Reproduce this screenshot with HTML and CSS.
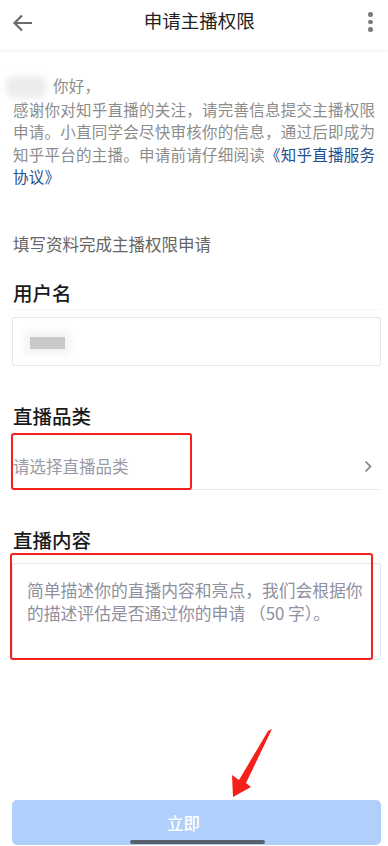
FILE: index.html
```html
<!DOCTYPE html>
<html lang="zh-CN">
<head>
    <meta charset="UTF-8">
    <meta name="viewport" content="width=device-width, initial-scale=1.0">
    <title>申请主播权限</title>
    <link rel="stylesheet" href="styles.css">
</head>
<body>
    <div id="page">
        <div class="header">
            <svg class="back" width="22" height="22" viewBox="0 0 22 22">
                <path d="M20 11H3M10 3.5L2.5 11L10 18.5" fill="none" stroke="#6b6b6b" stroke-width="2.2"/>
            </svg>
            <div class="title">申请主播权限</div>
            <div class="more">
                <span></span><span></span><span></span>
            </div>
        </div>

        <div class="content">
            <p class="greeting"><span class="blur-name"></span>你好，<br>感谢你对知乎直播的关注，请完善信息提交主播权限申请。小直同学会尽快审核你的信息，通过后即成为知乎平台的主播。申请前请仔细阅读<a class="link">《知乎直播服务协议》</a></p>

            <p class="intro">填写资料完成主播权限申请</p>

            <div class="label first">用户名</div>
            <div class="input">
                <span class="blur-user"></span>
            </div>

            <div class="label">直播品类</div>
            <div class="select">
                <span class="placeholder">请选择直播品类</span>
                <svg class="chevron" width="8" height="13" viewBox="0 0 8 13">
                    <path d="M1.5 1.5L6.5 6.5L1.5 11.5" fill="none" stroke="#7a7c88" stroke-width="1.6"/>
                </svg>
                <div class="mark mark-select"></div>
            </div>

            <div class="label">直播内容</div>
            <div class="textarea">
                <p class="placeholder">简单描述你的直播内容和亮点，我们会根据你的描述评估是否通过你的申请 （50 字）。</p>
                <div class="mark mark-text"></div>
            </div>
        </div>

        <button class="submit">立即</button>

        <svg class="arrow" width="388" height="846" viewBox="0 0 388 846">
            <polygon points="272,729 246,783 251,787 233,797 232,775 239,780 268,731" fill="#f5201a"/>
        </svg>
        <div class="home-bar"></div>
    </div>
</body>
</html>
```

FILE: styles.css
```css
body {
    margin: 0;
    background-color: #fff;
    font-family: "Noto Sans CJK SC", "Noto Sans", sans-serif;
}

#page {
    position: relative;
    width: 388px;
    height: 846px;
    overflow: hidden;
    display: flex;
    flex-direction: column;
}

.header {
    height: 50px;
    display: flex;
    align-items: center;
    justify-content: space-between;
    padding: 0 15px 0 12px;
    box-shadow: 0 1px 3px rgba(0, 0, 0, 0.08);
    flex-shrink: 0;
}

.back {
    margin-top: -4px;
}

.title {
    font-size: 18.5px;
    color: #222;
    margin-top: -10px;
    margin-left: -4px;
}

.more {
    display: flex;
    flex-direction: column;
    gap: 3px;
    margin-top: -6px;
}

.more span {
    width: 4.5px;
    height: 4.5px;
    border-radius: 50%;
    background-color: #7a7a7a;
}

.content {
    padding: 0 7px 0 12px;
}

.greeting {
    margin: 23.5px 0 0;
    font-size: 15.5px;
    letter-spacing: 0.25px;
    line-height: 22.6px;
    color: #8c8c8c;
    padding-left: 1px;
}

.blur-name {
    display: inline-block;
    width: 40px;
    height: 22px;
    margin-left: -7px;
    margin-right: 7px;
    vertical-align: -6px;
    background-color: #ececec;
    border-radius: 8px;
    filter: blur(3px);
}

.link {
    color: #1f4f8f;
}

.intro {
    margin: 45px 0 0;
    font-size: 16.5px;
    line-height: 23px;
    color: #666;
    padding-left: 1px;
}

.label {
    margin-top: 37px;
    font-size: 19.5px;
    line-height: 26px;
    font-weight: 500;
    color: #1a1a1a;
    padding-left: 1px;
}

.label.first {
    margin-top: 24.5px;
    padding-bottom: 3px;
    border-bottom: 1px solid #f4f4f4;
}

.input {
    margin-top: 7px;
    height: 47px;
    border: 1px solid #e6e6e6;
    border-radius: 2px;
    display: flex;
    align-items: center;
    padding-left: 17px;
}

.blur-user {
    width: 35px;
    height: 12px;
    background-color: #c9c9c9;
    box-shadow: 0 0 6px 6px #f5f5f5;
    margin-top: 2px;
}

.select {
    position: relative;
    margin-top: 4px;
    padding: 21.5px 0 11.5px 1px;
    border-bottom: 1px solid #ececec;
    display: flex;
    justify-content: space-between;
    align-items: center;
}

.placeholder {
    font-size: 16.5px;
    line-height: 23px;
    color: #9a9ba6;
}

.chevron {
    margin-right: 9px;
}

.textarea {
    position: relative;
    margin-top: 10px;
    height: 95px;
    border: 1px solid #e6e6e6;
    border-radius: 2px;
    padding: 0 14px;
}

.textarea .placeholder {
    margin: 15px 0 0;
    font-size: 16.8px;
    color: #8f8f9e;
}

.mark {
    position: absolute;
    border: 2.5px solid #f5201a;
    border-radius: 3px;
}

.mark-select {
    left: -1px;
    top: 0;
    width: 177px;
    height: 53px;
}

.mark-text {
    left: -3px;
    top: -11px;
    width: 359px;
    height: 103px;
}

.submit {
    margin: auto 7px 1px 12px;
    height: 45px;
    border: none;
    border-radius: 5px;
    padding-right: 32px;
    background-color: #b1cffb;
    color: #fff;
    font-family: "Noto Sans CJK SC", sans-serif;
    font-size: 16.5px;
    font-weight: 500;
}

.arrow {
    position: absolute;
    left: 0;
    top: 0;
    pointer-events: none;
}

.home-bar {
    position: absolute;
    left: 130px;
    bottom: 2px;
    width: 135px;
    height: 4px;
    border-radius: 2px;
    background-color: #59606d;
}
```
